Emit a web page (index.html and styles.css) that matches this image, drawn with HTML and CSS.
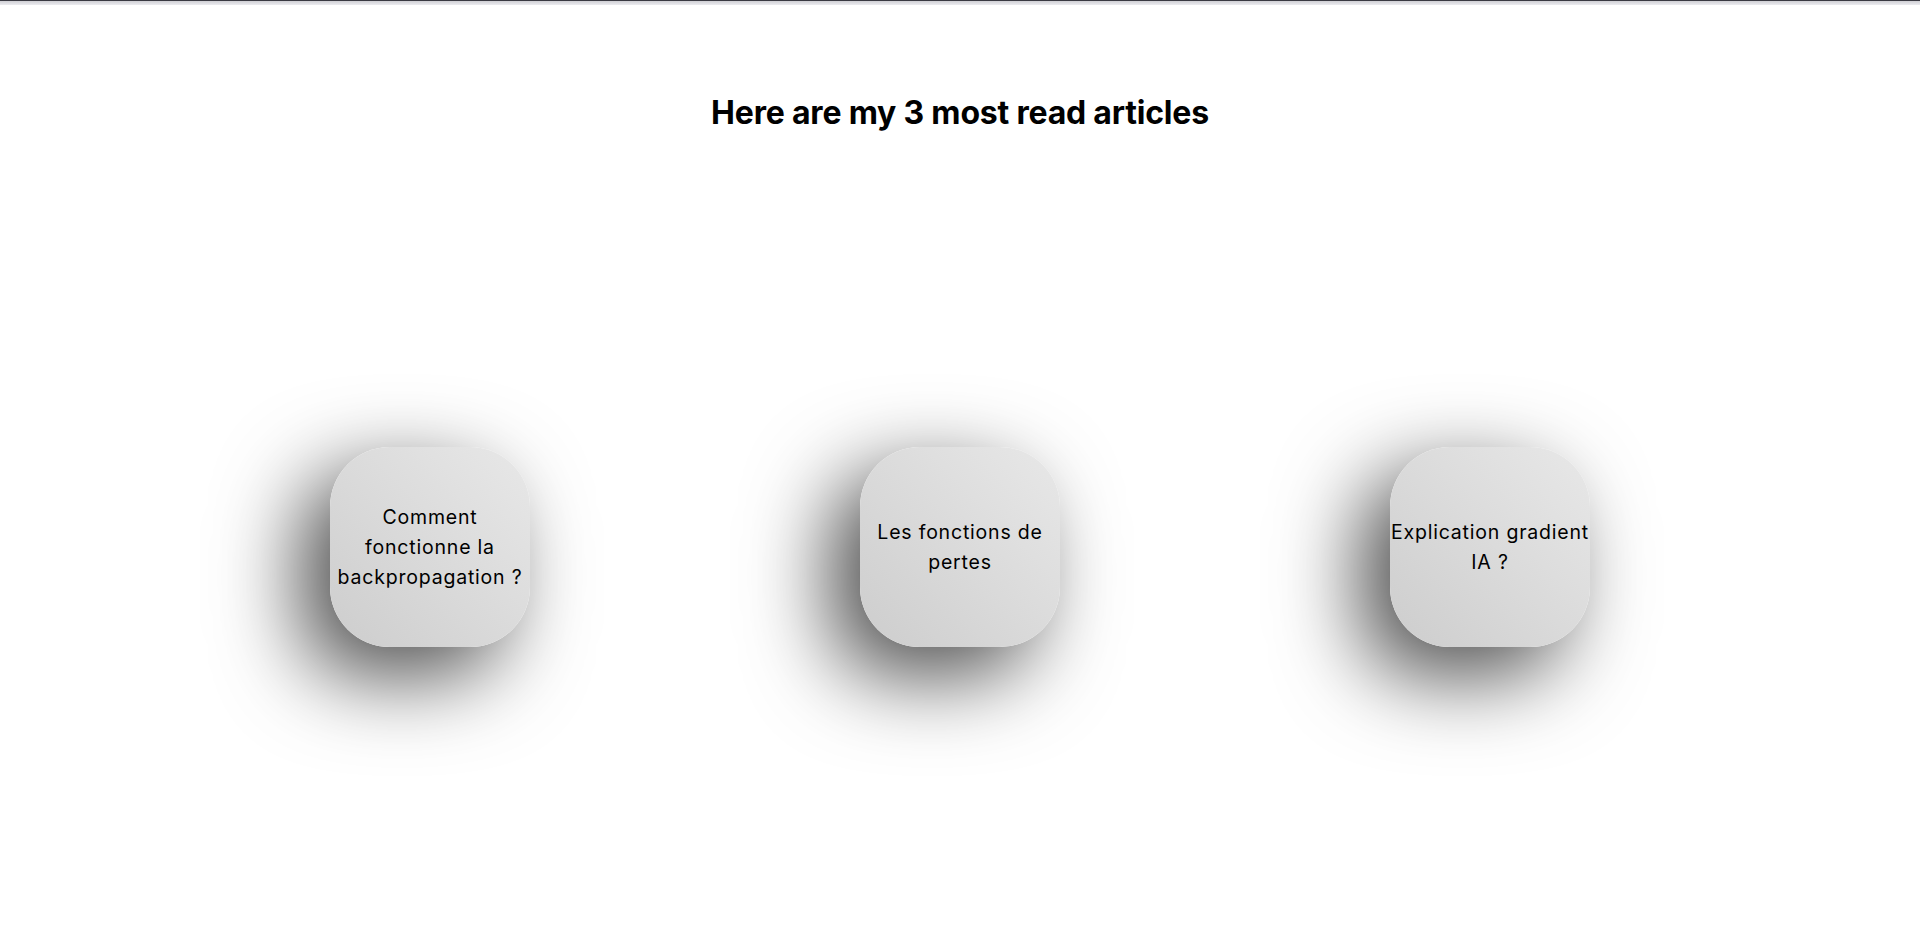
FILE: index.html
```html
<!DOCTYPE html>
<html lang="en">
<head>
<meta charset="utf-8">
<title>Most read articles</title>
<link rel="stylesheet" href="styles.css">
</head>
<body>
<div class="topbar"></div>
<main class="page">
  <h1 class="title">Here are my 3 most read articles</h1>
  <section class="cards">
    <a class="card" href="#">Comment<br>fonctionne la<br>backpropagation ?</a>
    <a class="card" href="#">Les fonctions de<br>pertes</a>
    <a class="card" href="#">Explication gradient<br>IA ?</a>
  </section>
</main>
</body>
</html>
```

FILE: styles.css
```css
* { box-sizing: border-box; }
html {
  overflow: hidden;
}
body {
  margin: 0;
  padding: 0;
  min-height: 925px;
  background: #ffffff;
  font-family: Inter, "Open Sans", "Liberation Sans", sans-serif;
  color: #000;
}
.topbar {
  height: 5px;
  border-top: 1px solid #3a3a42;
  background: linear-gradient(180deg, #cfcfd4, #ececf0);
}
.page {
  display: flex;
  flex-direction: column;
}
.title {
  margin: 0;
  padding-top: 90px;
  text-align: center;
  font-size: 32px;
  font-weight: 700;
  letter-spacing: -0.2px;
  line-height: 36px;
}
.cards {
  display: flex;
  justify-content: space-evenly;
  padding-top: 316px;
  padding-bottom: 200px;
}
.card {
  width: 200px;
  height: 200px;
  border-radius: 60px;
  background: linear-gradient(225deg, #e8e8e8, #cdcdcd);
  box-shadow: -28px 28px 85px #4d4d4d, 28px -28px 85px #ffffff;
  display: flex;
  align-items: center;
  justify-content: center;
  text-align: center;
  white-space: nowrap;
  font-size: 19.5px;
  line-height: 30px;
  letter-spacing: 0.8px;
  color: #000;
  text-decoration: none;
}
```
